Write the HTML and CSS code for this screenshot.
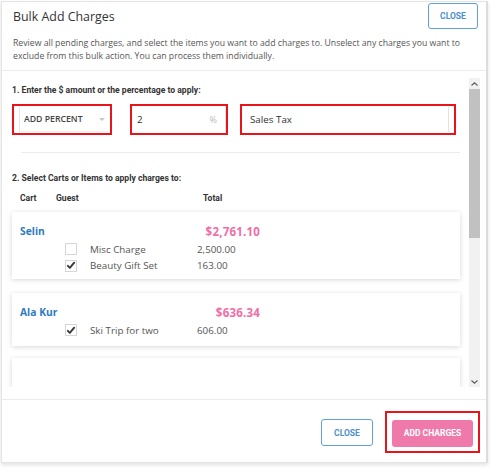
FILE: index.html
```
<!DOCTYPE html>
<html>
<head>
<meta charset="utf-8">
<link rel="stylesheet" href="styles.css">
</head>
<body>
<div class="modal">
  <div class="header">
    <div class="title-row">
      <h1 class="title">Bulk Add Charges</h1>
      <button class="btn btn-outline btn-top">CLOSE</button>
    </div>
    <p class="desc">Review all pending charges, and select the items you want to add charges to. Unselect any charges you want to exclude from this bulk action. You can process them individually.</p>
  </div>
  <div class="body">
    <div class="scroll">
      <div class="section-label">1. Enter the $ amount or the percentage to apply:</div>
      <div class="inputs">
        <div class="hl hl-select">
          <div class="select"><span>ADD PERCENT</span><span class="caret"></span></div>
        </div>
        <div class="hl hl-num">
          <div class="field"><span>2</span><span class="unit">%</span></div>
        </div>
        <div class="hl hl-text">
          <div class="field"><span>Sales Tax</span></div>
        </div>
      </div>
      <div class="sep"></div>
      <div class="section-label label2">2. Select Carts or Items to apply charges to:</div>
      <div class="thead"><span class="th-cart">Cart</span><span class="th-guest">Guest</span><span class="th-total">Total</span></div>

      <div class="card">
        <div class="card-head"><span class="guest">Selin</span><span class="total">$2,761.10</span></div>
        <div class="item"><span class="cb"></span><span class="iname">Misc Charge</span><span class="iamt">2,500.00</span></div>
        <div class="item"><span class="cb"><svg viewBox="0 0 12 12" width="11" height="11"><path d="M2.2 6.4 L4.6 8.8 L9.8 2.6" fill="none" stroke="#3a3a3a" stroke-width="2.3" stroke-linecap="round" stroke-linejoin="round"/></svg></span><span class="iname">Beauty Gift Set</span><span class="iamt">163.00</span></div>
      </div>

      <div class="card card2">
        <div class="card-head"><span class="guest">Ala Kur</span><span class="total">$636.34</span></div>
        <div class="item"><span class="cb"><svg viewBox="0 0 12 12" width="11" height="11"><path d="M2.2 6.4 L4.6 8.8 L9.8 2.6" fill="none" stroke="#3a3a3a" stroke-width="2.3" stroke-linecap="round" stroke-linejoin="round"/></svg></span><span class="iname">Ski Trip for two</span><span class="iamt">606.00</span></div>
      </div>

      <div class="card card-empty"></div>
    </div>
    <div class="scrollbar">
      <div class="sb-btn"><svg viewBox="0 0 7 4" width="7" height="4"><path d="M0.5 3.5 L3.5 0.8 L6.5 3.5" fill="none" stroke="#606060" stroke-width="1.2"/></svg></div>
      <div class="sb-thumb"></div>
      <div class="sb-track"></div>
      <div class="sb-btn"><svg viewBox="0 0 7 4" width="7" height="4"><path d="M0.5 0.5 L3.5 3.2 L6.5 0.5" fill="none" stroke="#606060" stroke-width="1.2"/></svg></div>
    </div>
  </div>
  <div class="footer">
    <button class="btn btn-outline btn-close2">CLOSE</button>
    <div class="hl hl-btn"><button class="btn btn-pink">ADD CHARGES</button></div>
  </div>
</div>
</body>
</html>
```
FILE: styles.css
```
* { box-sizing: border-box; }
html, body { margin: 0; padding: 0; background: #fff; }
body { width: 493px; height: 469px; overflow: hidden; font-family: "Open Sans", sans-serif; color: #444; }

.modal {
  margin: 1px 0 0 1px;
  width: 487px;
  height: 462px;
  border: 1px solid #e4e4e4;
  border-right: 2px solid #dcdcdc;
  box-shadow: 0 2px 4px rgba(0,0,0,0.12);
  display: flex;
  flex-direction: column;
  background: #fff;
}

.header { padding: 1px 8px 0 10px; border-bottom: 1px solid #ececec; height: 69px; flex: none; }
.title-row { display: flex; justify-content: space-between; align-items: flex-start; }
.title { margin: 6px 0 0 1px; font-size: 12.4px; font-weight: 400; color: #333; line-height: 16px; }
.desc { margin: 8px 0 0 1px; font-size: 8.7px; line-height: 13px; color: #555; }

.btn { font-family: Roboto, sans-serif; font-weight: 700; font-size: 8.5px; border-radius: 3px; cursor: pointer; }
.btn-outline { background: #fff; border: 1px solid #5fa2d6; color: #4a90cc; }
.btn-top { width: 50px; height: 26px; padding: 0; margin-top: 0; }

.body {
  flex: none;
  height: 309px;
  margin: 7px 6px 12px 0;
  display: flex;
}
.scroll { flex: 1; overflow: hidden; padding: 0 9px 0 10px; }

.scrollbar { width: 11px; flex: none; background: #f1f1f1; display: flex; flex-direction: column; }
.sb-btn { height: 11px; display: flex; align-items: center; justify-content: center; flex: none; }
.sb-btn svg { display: block; }
.sb-thumb { height: 149px; background: #c1c1c1; flex: none; }
.sb-track { flex: 1; }

.section-label { font-family: Roboto, sans-serif; font-weight: 700; font-size: 8.6px; color: #333; margin-top: 6px; line-height: 12px; }
.inputs { display: flex; margin-top: 8px; }
.hl { border: 2px solid #e8141c; }
.hl-select { width: 100px; height: 31px; padding: 1px 2px 1px 5px; }
.select { height: 100%; display: flex; align-items: center; justify-content: space-between; padding: 0 3px 0 4px; border-left: 1px solid #e6e6e6; border-bottom: 1px solid #ececec; font-size: 8.7px; font-weight: 600; color: #444; }
.caret { width: 0; height: 0; border-left: 3px solid transparent; border-right: 3px solid transparent; border-top: 3px solid #c8c8c8; }
.hl-num { width: 98px; height: 31px; margin-left: 18px; padding: 1px 0 1px 0; }
.hl-text { width: 216px; height: 31px; margin-left: 12px; padding: 1px 5px 1px 0; }
.field { height: 100%; display: flex; align-items: center; justify-content: space-between; padding: 0 8px 0 5px; border-right: 1px solid #e2e2e2; font-size: 9.8px; color: #333; }
.hl-text .field { padding-left: 8px; }
.unit { color: #bbb; font-size: 9px; }

.sep { height: 1px; background: #ececec; margin: 17px 0 0 9px; }
.label2 { margin-top: 19px; }
.thead { display: flex; font-family: Roboto, sans-serif; font-weight: 700; font-size: 8.6px; color: #333; margin-top: 8px; padding-left: 8px; line-height: 12px; }
.th-cart { width: 36px; }
.th-guest { width: 147px; }

.card { margin: 8px 0 14px 0; background: #fff; box-shadow: 0 1px 5px rgba(0,0,0,0.16); padding: 11px 0 5px 8px; }
.card2 { margin-top: 0; margin-bottom: 12px; padding-bottom: 7px; }
.card-empty { margin-top: 0; height: 60px; }
.card-head { display: flex; align-items: center; height: 16px; margin-bottom: 2px; }
.guest { width: 177px; font-weight: 700; font-size: 10.3px; color: #2d7bbf; }
.total { width: 63px; text-align: right; font-weight: 700; font-size: 11.5px; color: #f26ca7; letter-spacing: 0.2px; }
.item { display: flex; align-items: center; height: 16.5px; font-size: 9.8px; color: #555; }
.card2 .item { margin-top: 1px; }
.cb { width: 12px; height: 12px; border: 1px solid #d6d6d6; margin-left: 45px; margin-right: 13px; display: flex; align-items: center; justify-content: center; }
.cb svg { display: block; }
.iname { width: 107px; }

.footer { border-top: 1px solid #ececec; flex: 1; display: flex; align-items: flex-start; justify-content: flex-end; padding: 11px 6px 0 0; }
.btn-close2 { width: 52px; height: 27px; margin-top: 8px; padding: 0; }
.hl-btn { margin-left: 12px; width: 95px; height: 42px; padding: 6px 5px 5px 5px; }
.btn-pink { width: 100%; height: 100%; border: none; background: #ef79ab; color: #fff; padding: 0; }
```
